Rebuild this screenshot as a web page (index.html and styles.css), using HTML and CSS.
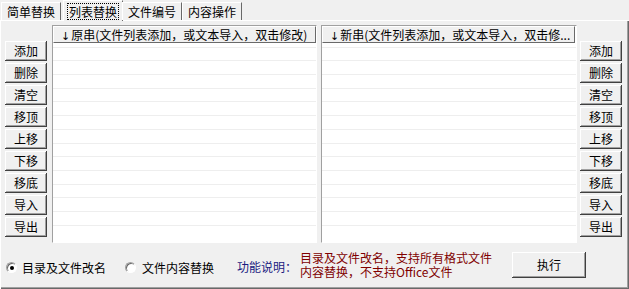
FILE: index.html
```html
<!DOCTYPE html>
<html lang="zh-CN">
<head>
    <meta charset="UTF-8">
    <title>列表替换</title>
    <link rel="stylesheet" href="styles.css">
</head>
<body>
    <div class="window">
        <!-- 选项卡 -->
        <div class="tabs">
            <div class="tab first">简单替换</div>
            <div class="tab active"><span class="focus">列表替换</span></div>
            <div class="tab">文件编号</div>
            <div class="tab">内容操作</div>
        </div>

        <div class="page">
            <div class="main">
                <!-- 左侧按钮 -->
                <div class="btn-col">
                    <button class="btn">添加</button>
                    <button class="btn">删除</button>
                    <button class="btn">清空</button>
                    <button class="btn">移顶</button>
                    <button class="btn">上移</button>
                    <button class="btn">下移</button>
                    <button class="btn">移底</button>
                    <button class="btn">导入</button>
                    <button class="btn">导出</button>
                </div>

                <!-- 原串列表 -->
                <div class="list list-left">
                    <div class="list-head"><span class="arrow">↓</span>原串(文件列表添加，或文本导入，双击修改)</div>
                    <div class="list-body"></div>
                </div>

                <!-- 新串列表 -->
                <div class="list list-right">
                    <div class="list-head"><span class="arrow">↓</span>新串(文件列表添加，或文本导入，双击修...</div>
                    <div class="list-body"></div>
                </div>

                <!-- 右侧按钮 -->
                <div class="btn-col">
                    <button class="btn">添加</button>
                    <button class="btn">删除</button>
                    <button class="btn">清空</button>
                    <button class="btn">移顶</button>
                    <button class="btn">上移</button>
                    <button class="btn">下移</button>
                    <button class="btn">移底</button>
                    <button class="btn">导入</button>
                    <button class="btn">导出</button>
                </div>
            </div>

            <div class="bottom">
                <label class="radio-item">
                    <span class="radio checked"></span>
                    <span>目录及文件改名</span>
                </label>
                <label class="radio-item second">
                    <span class="radio"></span>
                    <span>文件内容替换</span>
                </label>
                <span class="info-label">功能说明：</span>
                <div class="info-text">
                    <div>目录及文件改名，支持所有格式文件</div>
                    <div>内容替换，不支持Office文件</div>
                </div>
                <button class="btn run-btn">执行</button>
            </div>
        </div>
    </div>
</body>
</html>
```

FILE: styles.css
```css
* {
    margin: 0;
    padding: 0;
    box-sizing: border-box;
    font-family: "Noto Sans CJK SC", "Liberation Sans", sans-serif;
}

body {
    background-color: #f0f0f0;
    font-size: 12px;
    color: #000;
}

.window {
    width: 629px;
    height: 289px;
    overflow: hidden;
}

/* 选项卡 */
.tabs {
    display: flex;
    align-items: flex-end;
    height: 20px;
    padding-left: 1px;
    position: relative;
    z-index: 1;
}

.tab {
    height: 18px;
    line-height: 17px;
    padding: 0 5px;
    border-top: 1px solid #fff;
    border-left: 1px solid #fff;
    border-right: 1px solid #696969;
    background-color: #f0f0f0;
    white-space: nowrap;
}

.tab.first {
    padding-left: 5px;
}

.tab.active {
    height: 21px;
    margin: 0 -1px -1px 2px;
    padding: 2px 3px 0;
    line-height: 15px;
}

.focus {
    display: inline-block;
    padding: 0 1px;
    border: 1px dotted #000;
}

.page {
    height: 269px;
    border-top: 1px solid #fff;
    border-left: 1px solid #fff;
    box-shadow: inset -1px -1px #696969, inset -2px -2px #a0a0a0;
}

.main {
    display: flex;
    padding: 4px 0 0 4px;
    height: 222px;
}

/* 按钮 */
.btn {
    display: block;
    background-color: #f0f0f0;
    border: none;
    font-size: 12px;
    color: #000;
    box-shadow: inset -1px -1px #404040, inset 1px 1px #fff, inset -2px -2px #a0a0a0, inset 2px 2px #f0f0f0;
}

.btn-col {
    width: 42px;
    padding-top: 16px;
}

.btn-col .btn {
    width: 42px;
    height: 20px;
    line-height: 18px;
    margin-bottom: 2px;
}

/* 列表 */
.list {
    height: 218px;
    border-top: 1px solid #a0a0a0;
    border-left: 1px solid #a0a0a0;
    border-right: 1px solid #fff;
    border-bottom: 1px solid #fff;
    background-color: #fff;
    display: flex;
    flex-direction: column;
}

.list-left {
    width: 265px;
    margin-left: 5px;
}

.list-right {
    width: 256px;
    margin-left: 4px;
    margin-right: 3px;
}

.list-head {
    height: 17px;
    line-height: 15px;
    padding-left: 7px;
    background-color: #f0f0f0;
    border-top: 1px solid #fff;
    border-left: 1px solid #fff;
    border-right: 1px solid #696969;
    border-bottom: 1px solid #696969;
    white-space: nowrap;
    overflow: hidden;
}

.arrow {
    font-family: "DejaVu Sans", sans-serif;
    font-size: 11px;
    color: #000;
    margin-right: 1px;
}

.list-right .list-head {
    margin-right: 1px;
}

.list-body {
    flex: 1;
    background-image: repeating-linear-gradient(to bottom, transparent 0, transparent 12.7px, #eeeeee 12.7px, #eeeeee 13.7px);
    background-position: 0 -9px;
}

/* 底部 */
.bottom {
    display: flex;
    align-items: center;
    height: 44px;
    padding-left: 5px;
}

.radio-item {
    display: flex;
    align-items: center;
    margin-top: 4px;
}

.radio-item.second {
    margin-left: 19px;
}

.radio {
    width: 11px;
    height: 11px;
    border-radius: 50%;
    background-color: #fff;
    border: 1px solid;
    border-color: #a0a0a0 #fff #fff #a0a0a0;
    box-shadow: inset 1px 1px #696969;
    margin-right: 5px;
    position: relative;
}

.radio-item.second .radio {
    margin-right: 6px;
}

.radio.checked::after {
    content: "";
    position: absolute;
    left: 3px;
    top: 3px;
    width: 4px;
    height: 4px;
    border-radius: 50%;
    background-color: #000;
}

.info-label {
    margin-left: 23px;
    margin-top: 2px;
    color: #1a1a80;
}

.info-text {
    margin-left: 3px;
    width: 192px;
    line-height: 14px;
    color: #800000;
}

.run-btn {
    margin-left: 20px;
    margin-top: -1px;
    width: 74px;
    height: 26px;
}
```
